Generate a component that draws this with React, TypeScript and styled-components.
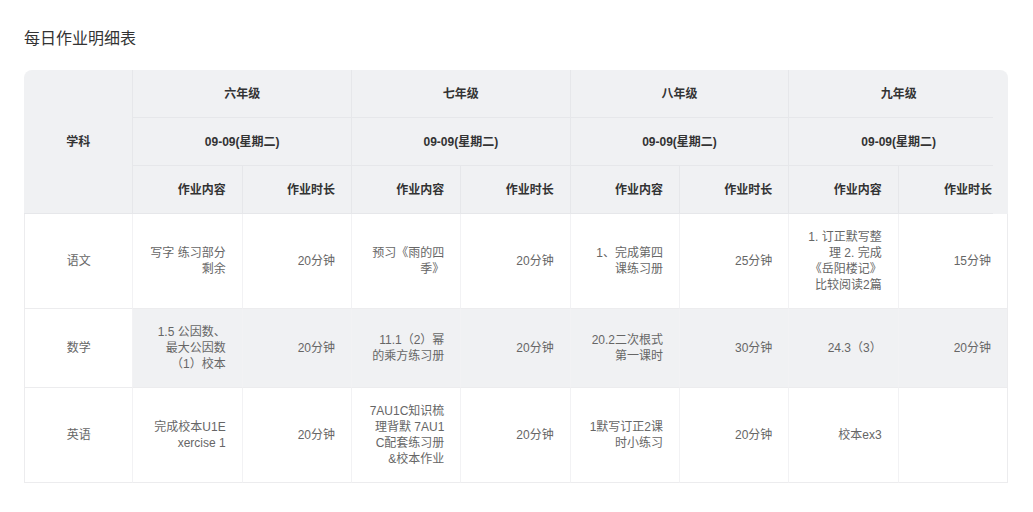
import React from 'react'
import styled, { createGlobalStyle } from 'styled-components'

const GlobalStyle = createGlobalStyle`
  html, body {
    margin: 0;
    padding: 0;
    background: #ffffff;
  }
  body {
    font-family: "Liberation Sans", "Noto Sans CJK SC", sans-serif;
  }
`

const Page = styled.div`
  padding: 28px 24px 0 24px;
  width: 985px;
`

const Title = styled.h2`
  margin: 0 0 21px 0;
  font-size: 16px;
  line-height: 21px;
  font-weight: 400;
  color: #333333;
`

const Table = styled.table`
  width: 984px;
  table-layout: fixed;
  border-collapse: separate;
  border-spacing: 0;
  font-size: 12px;
  line-height: 16px;
`

const HeadCell = styled.th<{
  $align?: 'left' | 'center' | 'right'
  $trim?: boolean
  $corner?: 'left' | 'right'
  $last?: boolean
}>`
  height: 48px;
  box-sizing: border-box;
  padding: 0 16px;
  background: #f0f1f3;
  color: #333333;
  font-weight: 700;
  text-align: ${(p) => p.$align || 'center'};
  vertical-align: middle;
  border-bottom: ${(p) => (p.$trim ? 'none' : '1px solid #e6e7ea')};
  border-right: ${(p) => (p.$last ? 'none' : '1px solid #e6e7ea')};
  ${(p) =>
    p.$trim &&
    `background: linear-gradient(#e6e7ea, #e6e7ea) left bottom / calc(100% - 15px) 1px no-repeat, #f0f1f3;`}
  ${(p) => p.$corner === 'left' && 'border-top-left-radius: 8px;'}
  ${(p) => p.$corner === 'right' && 'border-top-right-radius: 8px;'}
`

const Cell = styled.td<{ $subject?: boolean; $shade?: boolean; $last?: boolean }>`
  box-sizing: border-box;
  padding: 15px 16px;
  color: #666666;
  text-align: ${(p) => (p.$subject ? 'center' : 'right')};
  vertical-align: middle;
  background: ${(p) => (p.$shade ? '#f0f1f3' : '#ffffff')};
  border-bottom: 1px solid #ececee;
  border-right: 1px solid ${(p) => (p.$last ? '#ececee' : '#f2f2f4')};
  ${(p) => p.$subject && 'border-left: 1px solid #ececee;'}
  word-break: break-all;
`

const grades = ['六年级', '七年级', '八年级', '九年级']

type Row = { subject: string; items: [string, string][] }

const rows: Row[] = [
  {
    subject: '语文',
    items: [
      ['写字 练习部分剩余', '20分钟'],
      ['预习《雨的四季》', '20分钟'],
      ['1、完成第四课练习册', '25分钟'],
      ['1. 订正默写整理 2. 完成《岳阳楼记》比较阅读2篇', '15分钟'],
    ],
  },
  {
    subject: '数学',
    items: [
      ['1.5 公因数、最大公因数（1）校本', '20分钟'],
      ['11.1（2）幂的乘方练习册', '20分钟'],
      ['20.2二次根式第一课时', '30分钟'],
      ['24.3（3）', '20分钟'],
    ],
  },
  {
    subject: '英语',
    items: [
      ['完成校本U1Exercise 1', '20分钟'],
      ['7AU1C知识梳理背默 7AU1C配套练习册&校本作业', '20分钟'],
      ['1默写订正2课时小练习', '20分钟'],
      ['校本ex3', ''],
    ],
  },
]

export default function App() {
  return (
    <Page>
      <GlobalStyle />
      <Title>每日作业明细表</Title>
      <Table>
        <colgroup>
          {Array.from({ length: 9 }).map((_, i) => (
            <col key={i} style={{ width: 984 / 9 }} />
          ))}
        </colgroup>
        <thead>
          <tr>
            <HeadCell rowSpan={3} $corner="left">
              学科
            </HeadCell>
            {grades.map((g, i) => (
              <HeadCell
                key={g}
                colSpan={2}
                $trim={i === 3}
                $last={i === 3}
                $corner={i === 3 ? 'right' : undefined}
              >
                {g}
              </HeadCell>
            ))}
          </tr>
          <tr>
            {grades.map((g, i) => (
              <HeadCell key={g} colSpan={2} $trim={i === 3} $last={i === 3}>
                09-09(星期二)
              </HeadCell>
            ))}
          </tr>
          <tr>
            {grades.map((g, i) => (
              <React.Fragment key={g}>
                <HeadCell $align="right">作业内容</HeadCell>
                <HeadCell $align="right" $trim={i === 3} $last={i === 3}>
                  作业时长
                </HeadCell>
              </React.Fragment>
            ))}
          </tr>
        </thead>
        <tbody>
          {rows.map((r, ri) => (
            <tr key={r.subject}>
              <Cell $subject>{r.subject}</Cell>
              {r.items.map(([content, time], i) => (
                <React.Fragment key={i}>
                  <Cell $shade={ri === 1}>{content}</Cell>
                  <Cell $shade={ri === 1} $last={i === 3}>
                    {time}
                  </Cell>
                </React.Fragment>
              ))}
            </tr>
          ))}
        </tbody>
      </Table>
    </Page>
  )
}
